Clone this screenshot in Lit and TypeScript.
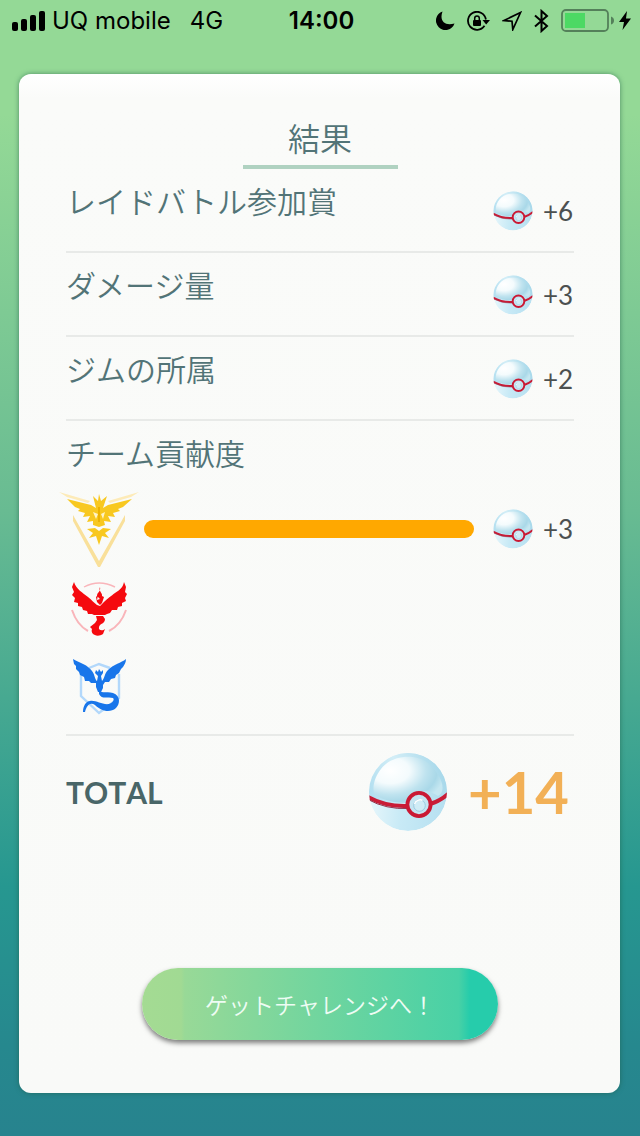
import { LitElement, html, css, svg } from "lit";
import { customElement, property } from "lit/decorators.js";

@customElement("premier-ball")
class PremierBall extends LitElement {
  static styles = css`
    :host { display: block; }
    svg { display: block; width: 100%; height: 100%; }
  `;
  render() {
    return html`<svg viewBox="0 0 80 80" aria-hidden="true">
      <defs>
        <linearGradient id="base" x1="0" y1="0.8" x2="1" y2="0.9">
          <stop offset="0" stop-color="#e6f6fb" />
          <stop offset="0.4" stop-color="#c8eaf6" />
          <stop offset="1" stop-color="#b5dff0" />
        </linearGradient>
        <radialGradient id="dome" cx="0.24" cy="0.3" r="0.8">
          <stop offset="0" stop-color="#ffffff" />
          <stop offset="0.35" stop-color="#f4fbfd" />
          <stop offset="0.65" stop-color="#bfe3ef" />
          <stop offset="0.85" stop-color="#a9d8e8" />
          <stop offset="1" stop-color="#c5e7f1" />
        </radialGradient>
        <linearGradient id="shell" x1="0" y1="0.6" x2="1" y2="0.4">
          <stop offset="0" stop-color="#b3dff0" />
          <stop offset="0.4" stop-color="#d3eef7" />
          <stop offset="1" stop-color="#a3d6e9" />
        </linearGradient>
        <clipPath id="round"><circle cx="40" cy="40" r="39" /></clipPath>
      </defs>
      <g clip-path="url(#round)">
        <circle cx="40" cy="40" r="39" fill="url(#base)" />
        <path d="M0 0H80V42Q62 56 46 54Q20 56 0 45Z" fill="url(#shell)" />
        <path d="M13 17C22 4 48 0 61 12C74 24 79 39 70 44C66 41 61 39 55 39C46 39 40 44 38 51C22 51 8 45 6 41C4 33 8 23 13 17Z" fill="url(#dome)" />
        <path d="M0 45Q18 55 40 54L62 52Q72 49 80 42" fill="none" stroke="#c91c36" stroke-width="4" />
        <path d="M0 47.500Q18 57.500 40 56.500" fill="none" stroke="#93324a" stroke-width="1" />
      </g>
      <circle cx="51" cy="52.500" r="11.600" fill="#c5e5f2" stroke="#ca1934" stroke-width="3.800" />
      <circle cx="51.500" cy="53.500" r="5.800" fill="#d0ecf6" stroke="#9bcbe0" stroke-width="1" />
      <path d="M46.500 52A6 6 0 0 1 54.500 48.300" fill="none" stroke="#fff" stroke-width="1.400" />
    </svg>`;
  }
}

const instinct = svg`
  <g fill="#fdebb8">
    <path d="M0 1L31 10L29 12L8 6Z M80 1L49 10L51 12L72 6Z" />
    <path d="M14 24L40 70L66 24L66 30L41 76H39L14 30Z" fill="#f9e09a" />
  </g>
  <g fill="#f8c820">
    <path d="M8 8L32 14L37 17L34 5L39 10L40 3L42 10L48 5L44 17L49 14L73 8L64 16L59 18L61 20L54 22L56 26L49 25L52 31L45 30L46 34L40 36L34 34V30L28 31L31 25L24 26L26 22L19 20L21 18L16 16Z" />
    <path d="M28 38L36 37L40 40L44 37L52 38L46 42L50 47L43 45L40 54L37 45L30 47L34 42Z" />
  </g>
  <path d="M34 21L39 23L37 28Z M46 21L42 23L44 28Z" fill="#fff3c8" />
  <path d="M40 16V31" stroke="#edb200" stroke-width="2" />`;

const valor = svg`
  <g fill="none" stroke="#f9b5ba" stroke-width="1.400">
    <path d="M25 6Q40 -2 56 6" />
    <path d="M13 29Q18 44 29 50 M67 29Q62 44 50 50" stroke-width="2" />
  </g>
  <g fill="#f50a0f">
    <path d="M15 1C17 8 24 12 29 16C33 19 35 22 38 24L41 25L44 22C49 17 52 15 56 12C61 9 64 6 65 1L67 6L66 11L68 13L66 17L67 20L63 22L63 25L59 26L58 29L53 29L51 32L48 33L46 34H35L33 33H29L28 30L24 29L23 26L19 25L19 22L15 21L16 17L13 14L15 11L13 6Z" />
    <path d="M41 6C39 10 44 12 43 15L45 16L43 22L41 24L38 21L37 16L39 14L38 19L41 18L38 15C38 11 42 11 41 6Z" />
    <path d="M37 35H44L46 38C46 43 41 42 40 46C39 50 44 50 46 48L44 53C38 57 31 53 33 48L31 46L36 42L38 39Z" />
  </g>`;

const mystic = svg`
  <g fill="none" stroke="#b2d8fb" stroke-width="2.400">
    <path d="M30 10L40 6L51 10 M22 16V38L40 55L60 40V16" />
  </g>
  <g fill="#1976ea">
    <path d="M14 1C21 5 29 7 33 13C36 17 36 22 38 23L39 18L36 15L37 12L39 14L40 11L42 14L44 12L44 15L42 18L43 23C46 20 45 16 49 12C55 6 62 5 67 1C67 5 65 7 64 9L62 11L60 15L57 17L56 20L52 21L50 24L46 24L44 27L44 30L42 34H39L37 29L37 25L32 25L30 23L26 23L25 19L21 17L20 14L17 11L17 8L15 6Z" />
    <path d="M40 32C43 36 49 33 54 35C62 38 61 46 57 50C50 56 41 52 36 47C31 44 28 47 26 54H24C24 48 27 43 31 43C37 42 43 47 50 46C53 45 56 42 54 40C49 38 43 42 40 36Z" />
  </g>`;

@customElement("reward-count")
class RewardCount extends LitElement {
  @property({ type: Number }) count = 0;
  static styles = css`
    :host { display: flex; align-items: center; gap: 10px; }
    premier-ball { width: 40px; height: 40px; }
    .count { width: 31px; font: 26px/32px Lato, sans-serif; color: #4c5050; }
  `;
  render() {
    return html`<premier-ball></premier-ball><span class="count">+${this.count}</span>`;
  }
}

@customElement("status-bar")
class StatusBar extends LitElement {
  static styles = css`
    :host {
      display: grid; grid-template-columns: 1fr auto 1fr; align-items: center;
      height: 41px; padding: 0 9px 0 12px; color: #000;
      font: 24px/30px Inter, sans-serif;
    }
    .carrier, .icons { display: flex; align-items: center; }
    .carrier { gap: 7px; }
    .network { margin-left: 12px; }
    .time { font-weight: 600; }
    .icons { justify-content: flex-end; gap: 12px; }
    svg { display: block; flex: none; }
    .power { display: flex; align-items: center; gap: 5px; }
  `;
  render() {
    return html`
      <div class="carrier">
        <svg width="33" height="20" viewBox="0 0 33 20" aria-label="Signal">
          <rect y="11" width="6" height="9" rx="2" /><rect x="9" y="8" width="6" height="12" rx="2" />
          <rect x="18" y="4" width="6" height="16" rx="2" /><rect x="27" width="6" height="20" rx="2" />
        </svg>
        <span>UQ mobile</span><span class="network">4G</span>
      </div>
      <div class="time">14:00</div>
      <div class="icons">
        <svg width="19" height="19" viewBox="0 0 19 19"><path d="M6.500 0.500C3 10 9 15.500 18.500 12.500A9.500 9.500 0 1 1 6.500 0.500Z" /></svg>
        <svg width="23" height="20" viewBox="0 0 23 20">
          <path d="M18.900 8.500A9 9 0 1 0 17.500 14.800" fill="none" stroke="#000" stroke-width="1.800" />
          <path d="M15.500 9H23L19.200 13.500Z" /><rect x="6" y="9" width="8" height="6" rx="1" />
          <path d="M7.700 9.500V7.200a2.300 2.300 0 0 1 4.600 0V9.500" fill="none" stroke="#000" stroke-width="1.500" />
        </svg>
        <svg width="20" height="20" viewBox="0 0 20 20"><path d="M18.500 1.500L2 9.500L10 10.200L10.800 18.500Z" fill="none" stroke="#000" stroke-width="1.700" /></svg>
        <svg width="15" height="24" viewBox="0 0 15 24"><path d="M1 6.500L13 17L7.500 22V2L13 7L1 17.500" fill="none" stroke="#000" stroke-width="2" /></svg>
        <div class="power">
          <svg width="53" height="24" viewBox="0 0 53 24" aria-label="Battery">
            <rect x="1" y="1" width="46" height="21" rx="4" fill="none" stroke="#54805a" stroke-width="1.800" />
            <rect x="4" y="4" width="20" height="15" fill="#4cd964" /><path d="M50 7.500Q53 8.500 53 11.500T50 15.500Z" fill="#54805a" />
          </svg>
          <svg width="12" height="19" viewBox="0 0 12 19"><path d="M8 0L0 11H5L3.500 19L12 7.500H7Z" /></svg>
        </div>
      </div>`;
  }
}

@customElement("app-root")
class AppRoot extends LitElement {
  private rewards = [
    { label: "レイドバトル参加賞", count: 6 },
    { label: "ダメージ量", count: 3 },
    { label: "ジムの所属", count: 2 },
  ];
  private teams = [
    { name: "instinct", art: instinct, share: 100, count: 3 },
    { name: "valor", art: valor, share: 0, count: 0 },
    { name: "mystic", art: mystic, share: 0, count: 0 },
  ];

  static styles = css`
    :host {
      display: flex; flex-direction: column; box-sizing: border-box; min-height: 100vh;
      background: linear-gradient(#94d996 0%, #94d996 10%, #68bb92 45%, #269790 78%, #26888e 92%, #27838e 100%);
      font-family: "Noto Sans CJK JP", sans-serif; color: #527477;
    }
    .card {
      flex: 1; display: flex; flex-direction: column;
      margin: 33px 20px 43px 19px; padding: 39px 46px 53px 47px; border-radius: 12px;
      background: linear-gradient(#fff 0, #fafbf9 24px, #f9faf8 100%);
      box-shadow: 0 0 5px rgba(30, 90, 70, 0.6);
    }
    h1 {
      align-self: center; box-sizing: border-box; width: 155px; height: 56px; margin: 0;
      border-bottom: 4px solid #b0d2c1; text-align: center; font-size: 32px; line-height: 48px; font-weight: 350;
    }
    h2 { margin: 0; font-size: 30px; line-height: 44px; font-weight: 350; }
    .row {
      display: flex; justify-content: space-between; box-sizing: border-box; height: 84px;
      padding-top: 9px; border-bottom: 2px solid #e8eae8;
    }
    .row reward-count { align-self: flex-start; margin-top: 13px; }
    .teams { padding: 9px 0; border-bottom: 2px solid #e8eae8; }
    .teams h2 { margin-bottom: 12px; }
    .team { display: flex; align-items: center; height: 85px; }
    .team + .team { height: 77px; }
    .team svg { flex: none; width: 80px; height: 76px; margin-left: -7px; }
    .team + .team svg { height: 58px; }
    .track { flex: 1; height: 18px; margin: 0 19px 0 5px; }
    .fill { height: 100%; border-radius: 9px; background: #ffa800; }
    .total {
      display: flex; align-items: center; padding-top: 16px; color: #496668;
      font-family: Lato, sans-serif; font-size: 30px; line-height: 32px; font-weight: 700; font-kerning: none;
    }
    .total span { flex: 1; }
    .total premier-ball { width: 80px; height: 80px; }
    .total strong { width: 106px; margin-left: 20px; font-size: 58px; line-height: 72px; font-weight: 700; color: #f2b056; }
    button {
      align-self: center; width: 356px; height: 72px; margin-top: auto; border: 0; border-radius: 36px;
      background: linear-gradient(90deg, #a4db93 0, #a1da93 11%, #98d997 12%, #48d1a6 89%, #26ccab 92%);
      box-shadow: 0 3px 5px rgba(0, 0, 0, 0.5); color: #eefcf4;
      font: 350 23px/34px "Noto Sans CJK JP", sans-serif;
    }
  `;

  render() {
    return html`
      <status-bar></status-bar>
      <main class="card">
        <h1>結果</h1>
        ${this.rewards.map((r) => html`<section class="row"><h2>${r.label}</h2><reward-count .count=${r.count}></reward-count></section>`)}
        <section class="teams">
          <h2>チーム貢献度</h2>
          ${this.teams.map((t, i) => html`
            <div class="team">
              <svg viewBox=${i === 0 ? "0 0 80 76" : "0 0 80 58"} role="img" aria-label=${t.name}>${t.art}</svg>
              ${t.share ? html`<div class="track"><div class="fill" style="width:${t.share}%"></div></div>
                <reward-count .count=${t.count}></reward-count>` : null}
            </div>`)}
        </section>
        <div class="total"><span>TOTAL</span><premier-ball></premier-ball><strong>+14</strong></div>
        <button type="button">ゲットチャレンジへ！</button>
      </main>`;
  }
}
